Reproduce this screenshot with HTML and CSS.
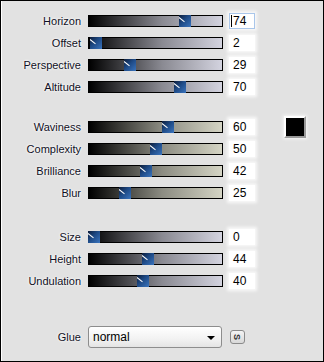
FILE: index.html
```html
<!DOCTYPE html>
<html lang="en">

<head>
    <meta charset="UTF-8">
    <meta name="viewport" content="width=device-width, initial-scale=1.0">
    <title>Wave settings</title>
    <link rel="stylesheet" href="styles.css">
</head>

<body>
    <div class="panel">
        <div class="group cool">
            <div class="row">
                <label>Horizon</label>
                <div class="track"><span class="thumb" style="--v: 74"></span></div>
                <div class="num focus"><span class="caret"></span>74</div>
            </div>
            <div class="row">
                <label>Offset</label>
                <div class="track"><span class="thumb" style="--v: 2"></span></div>
                <div class="num">2</div>
            </div>
            <div class="row">
                <label>Perspective</label>
                <div class="track"><span class="thumb" style="--v: 29"></span></div>
                <div class="num">29</div>
            </div>
            <div class="row">
                <label>Altitude</label>
                <div class="track"><span class="thumb" style="--v: 70"></span></div>
                <div class="num">70</div>
            </div>
        </div>

        <div class="group warm">
            <div class="row">
                <label>Waviness</label>
                <div class="track"><span class="thumb" style="--v: 60"></span></div>
                <div class="num">60</div>
                <div class="swatch"></div>
            </div>
            <div class="row">
                <label>Complexity</label>
                <div class="track"><span class="thumb" style="--v: 50"></span></div>
                <div class="num">50</div>
            </div>
            <div class="row">
                <label>Brilliance</label>
                <div class="track"><span class="thumb" style="--v: 42"></span></div>
                <div class="num">42</div>
            </div>
            <div class="row">
                <label>Blur</label>
                <div class="track"><span class="thumb" style="--v: 25"></span></div>
                <div class="num">25</div>
            </div>
        </div>

        <div class="group cool last">
            <div class="row">
                <label>Size</label>
                <div class="track"><span class="thumb" style="--v: 0"></span></div>
                <div class="num">0</div>
            </div>
            <div class="row">
                <label>Height</label>
                <div class="track"><span class="thumb" style="--v: 44"></span></div>
                <div class="num">44</div>
            </div>
            <div class="row">
                <label>Undulation</label>
                <div class="track"><span class="thumb" style="--v: 40"></span></div>
                <div class="num">40</div>
            </div>
        </div>

        <div class="glue-row">
            <label>Glue</label>
            <div class="select">
                <span>normal</span>
                <span class="arrow"></span>
            </div>
            <div class="small-btn"><span>S</span></div>
        </div>
    </div>
</body>

</html>
```

FILE: styles.css
```css
* {
    margin: 0;
    padding: 0;
    box-sizing: border-box;
    font-family: "Liberation Sans", Arial, sans-serif;
}

body {
    background-color: #e2e2e2;
}

.panel {
    width: 324px;
    height: 362px;
    border: 1px solid #000;
    box-shadow: inset 1px 0 0 #fff;
    background-color: #e2e2e2;
    padding-top: 9px;
}

.group {
    display: flex;
    flex-direction: column;
    margin-bottom: 18px;
}

.group.warm {
    margin-bottom: 22px;
}

.group.last {
    margin-bottom: 34px;
}

.row {
    display: flex;
    align-items: center;
    height: 22px;
}

label {
    width: 80px;
    margin-right: 7px;
    text-align: right;
    font-size: 11px;
    color: #101024;
    text-shadow: 0 0 3px #fff, 0 0 2px #fff;
}

.track {
    position: relative;
    width: 135px;
    height: 12px;
    border: 1px solid #000;
}

.cool .track {
    background: linear-gradient(to right, #000, #8a8a92 55%, #d3d3df);
}

.warm .track {
    background: linear-gradient(to right, #000, #8c8c82 55%, #d4d4c4);
}

/* thumb position comes from the value */
.thumb {
    position: absolute;
    top: -1px;
    bottom: -1px;
    width: 12px;
    left: calc((100% - 10px) * var(--v) / 100 - 1px);
    background: linear-gradient(135deg, #0d1d3a 0%, #1e4a86 45%, #3a74bd 100%);
    overflow: hidden;
}

.thumb::before {
    content: "";
    position: absolute;
    top: 2px;
    left: 0;
    width: 7px;
    height: 1px;
    background-color: #fff;
    transform: rotate(38deg);
    transform-origin: left center;
}

.num {
    width: 26px;
    height: 16px;
    margin-left: 6px;
    padding-left: 3px;
    background-color: #fff;
    border: 1px solid #fff;
    box-shadow: 0 0 3px 2px rgba(255, 255, 255, 0.8);
    font-size: 12px;
    line-height: 14px;
    color: #000;
    display: flex;
    align-items: center;
}

.num.focus {
    border-color: #a9c6ea;
    padding-left: 1px;
}

.caret {
    width: 1px;
    height: 12px;
    background-color: #000;
    margin-right: 1px;
}

.swatch {
    width: 22px;
    height: 22px;
    margin-left: 29px;
    background-color: #000;
    border: 2px solid;
    border-color: #fff #9a9a9a #9a9a9a #fff;
    box-shadow: 0 0 3px 1px rgba(255, 255, 255, 0.7);
}

.glue-row {
    display: flex;
    align-items: center;
    height: 22px;
}

.select {
    width: 134px;
    height: 22px;
    border: 1px solid #8d8d8d;
    border-radius: 3px;
    background: linear-gradient(to bottom, #fff, #f2f2f2 60%, #e4e4e4);
    display: flex;
    align-items: center;
    justify-content: space-between;
    padding: 0 6px 0 4px;
    font-size: 12px;
    color: #000;
}

.arrow {
    width: 0;
    height: 0;
    border-left: 4px solid transparent;
    border-right: 4px solid transparent;
    border-top: 4px solid #000;
    margin-top: 1px;
}

.small-btn {
    width: 15px;
    height: 14px;
    margin-left: 8px;
    border: 1px solid #8a8a8a;
    border-radius: 3px;
    background: linear-gradient(to bottom, #f4f4f4, #d8d8d8);
    display: flex;
    align-items: center;
    justify-content: center;
    font-size: 9px;
    font-weight: bold;
    color: #333;
}

.small-btn span {
    transform: rotate(90deg);
}
```
